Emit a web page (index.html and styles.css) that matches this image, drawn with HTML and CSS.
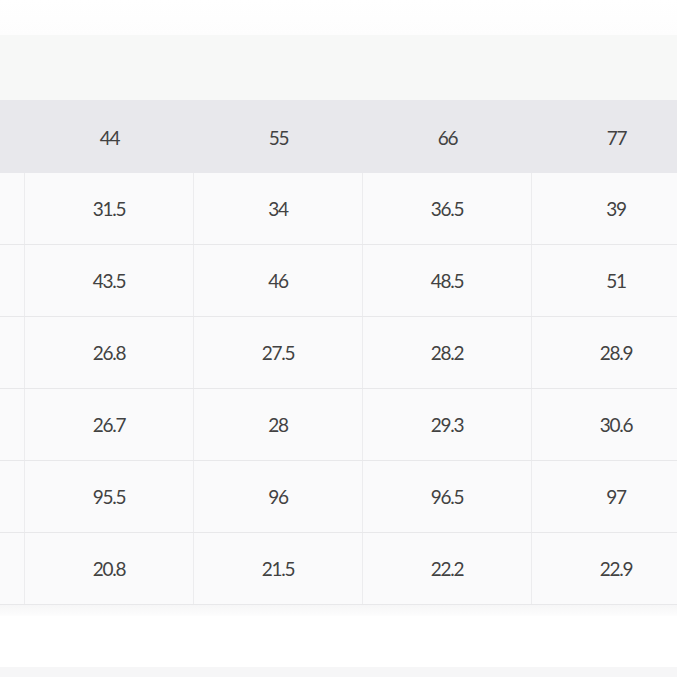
FILE: index.html
```html
<!DOCTYPE html>
<html>
<head>
<meta charset="utf-8">
<link rel="stylesheet" href="styles.css">
</head>
<body>
<div class="page">
  <div class="top"></div>
  <div class="band"></div>
  <div class="size-table">
    <div class="row head">
      <div class="cell label"></div>
      <div class="cell">44</div>
      <div class="cell">55</div>
      <div class="cell">66</div>
      <div class="cell">77</div>
    </div>
    <div class="row">
      <div class="cell label"></div>
      <div class="cell">31.5</div>
      <div class="cell">34</div>
      <div class="cell">36.5</div>
      <div class="cell">39</div>
    </div>
    <div class="row">
      <div class="cell label"></div>
      <div class="cell">43.5</div>
      <div class="cell">46</div>
      <div class="cell">48.5</div>
      <div class="cell">51</div>
    </div>
    <div class="row">
      <div class="cell label"></div>
      <div class="cell">26.8</div>
      <div class="cell">27.5</div>
      <div class="cell">28.2</div>
      <div class="cell">28.9</div>
    </div>
    <div class="row">
      <div class="cell label"></div>
      <div class="cell">26.7</div>
      <div class="cell">28</div>
      <div class="cell">29.3</div>
      <div class="cell">30.6</div>
    </div>
    <div class="row">
      <div class="cell label"></div>
      <div class="cell">95.5</div>
      <div class="cell">96</div>
      <div class="cell">96.5</div>
      <div class="cell">97</div>
    </div>
    <div class="row">
      <div class="cell label"></div>
      <div class="cell">20.8</div>
      <div class="cell">21.5</div>
      <div class="cell">22.2</div>
      <div class="cell">22.9</div>
    </div>
  </div>
  <div class="shade"></div>
  <div class="blank"></div>
  <div class="foot"></div>
</div>
</body>
</html>
```

FILE: styles.css
```css
html, body {
  margin: 0;
  padding: 0;
  background: #ffffff;
  overflow: hidden;
}

.page {
  width: 677px;
  height: 677px;
  overflow: hidden;
  font-family: Lato, "Liberation Sans", sans-serif;
  color: #424242;
}

.top {
  height: 35px;
  background: linear-gradient(#ffffff, #fdfdfd);
}

.band {
  height: 65px;
  background: #f7f8f7;
}

.size-table {
  width: 800px;
}

.row {
  display: grid;
  grid-template-columns: 25px 169px 169px 169px 169px;
  height: 72px;
  background: #fafafb;
  border-bottom: 1px solid #e8e8ea;
  box-sizing: border-box;
}

.row.head {
  height: 73px;
  background: #e8e8ec;
  border-bottom: none;
  padding-top: 1px;
}

.cell {
  display: flex;
  align-items: center;
  justify-content: center;
  font-size: 19px;
  letter-spacing: -1.3px;
  border-right: 1px solid #ececee;
}

.row.head .cell {
  border-right: none;
}

.shade {
  height: 11px;
  background: linear-gradient(#f6f6f7, #fdfdfd);
}

.blank {
  height: 51px;
  background: #ffffff;
}

.foot {
  height: 10px;
  background: #f6f6f7;
}
```
